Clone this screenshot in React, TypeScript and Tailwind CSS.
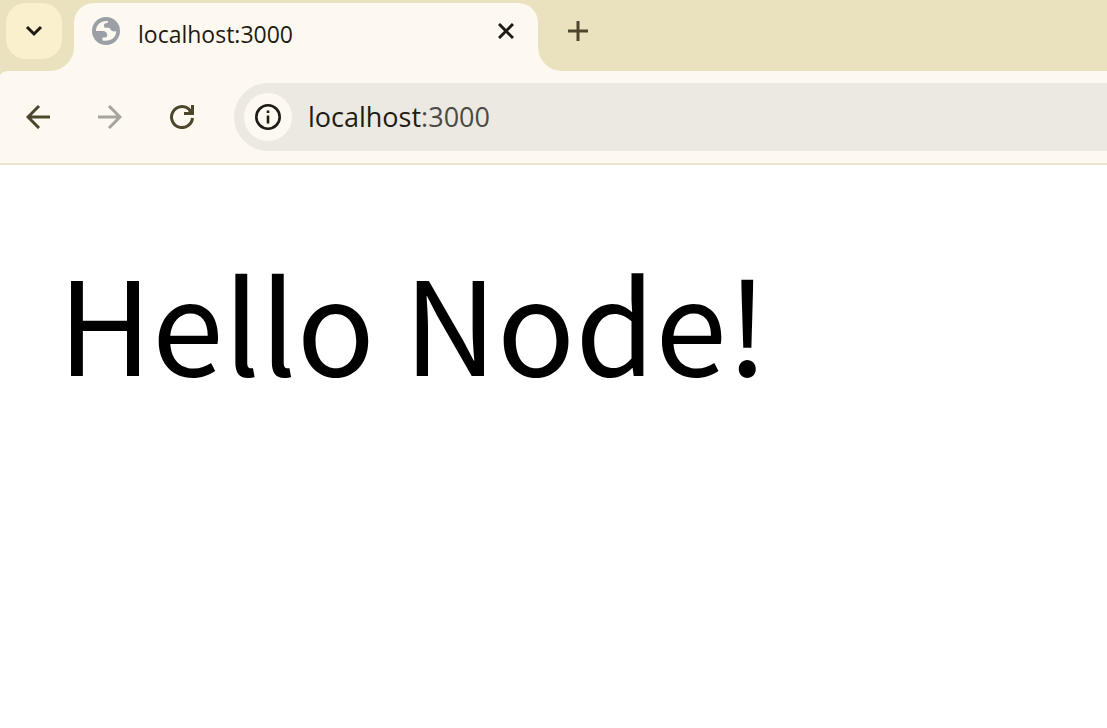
import React, { useState } from "react";

const GlobeIcon = () => (
  <svg viewBox="0 0 28 28" className="size-7 shrink-0" aria-hidden="true">
    <circle cx="14" cy="14" r="14" fill="#9AA0A6" />
    <path
      fill="#FEF9F0"
      d="M4 14C3.7 8.500 8.500 3.500 16 4c.2 1.600-.4 2.200-1.800 2.300C12.600 6.400 12 7 12 8.400c0 1.600.4 2.300 2 2.300h2.200c1.200 0 1.800.5 2.300 1.600.7 1.700 2 2.400 5.700 2C24 20.500 19 25 10.500 23.600v-3c1.700 0 3.500.2 4.300-.9.8-1.200.6-3-.5-4.200C13 14.200 12 14 10 14z"
    />
  </svg>
);

const ReloadIcon = () => (
  <svg viewBox="0 0 24 24" className="size-6" fill="none" stroke="currentColor" strokeWidth="3" aria-hidden="true">
    <path d="M22.500 13A10.500 10.500 0 1 1 19 4.200L22 8" />
    <path d="M22.500 0v8.500H14" />
    <path d="M22 3v6h-6z" fill="currentColor" stroke="none" />
  </svg>
);

const TabStrip = () => (
  <div className="flex h-[71px] items-start bg-[#EAE2BE] pl-1.5 pt-[3px]">
    <button
      aria-label="Search tabs"
      className="flex size-14 shrink-0 items-center justify-center rounded-[20px] bg-[#FBF0CD] text-[#1E1B13]"
    >
      <svg viewBox="0 0 18 12" className="h-3 w-[18px]" fill="none" stroke="currentColor" strokeWidth="3" aria-hidden="true">
        <path d="M2 2l7 7 7-7" />
      </svg>
    </button>

    {/* Active tab, flared into the toolbar at both feet */}
    <div className="relative ml-3 flex h-[68px] w-[464px] items-start rounded-t-[20px] bg-[#FEF9F0] pl-[18px] pr-5 pt-3.5">
      <svg viewBox="0 0 24 24" className="absolute -left-6 bottom-0 size-6" fill="#FEF9F0" aria-hidden="true">
        <path d="M24 0v24H0A24 24 0 0 0 24 0z" />
      </svg>
      <svg viewBox="0 0 24 24" className="absolute -right-6 bottom-0 size-6" fill="#FEF9F0" aria-hidden="true">
        <path d="M0 0v24h24A24 24 0 0 1 0 0z" />
      </svg>
      <GlobeIcon />
      <span className="ml-[18px] flex-1 text-[23px] leading-[34px] text-[#1E1B13]">localhost:3000</span>
      <button aria-label="Close tab" className="flex h-7 w-6 items-center justify-center text-[#1E1B13]">
        <svg viewBox="0 0 16 16" className="size-4" fill="none" stroke="currentColor" strokeWidth="3" aria-hidden="true">
          <path d="M1 1l14 14M15 1L1 15" />
        </svg>
      </button>
    </div>

    <button aria-label="New tab" className="ml-3 flex size-14 items-center justify-center text-[#4C462C]">
      <svg viewBox="0 0 20 20" className="size-5" fill="none" stroke="currentColor" strokeWidth="3" aria-hidden="true">
        <path d="M10 0v20M0 10h20" />
      </svg>
    </button>
  </div>
);

const AddressBar = () => {
  const [focused, setFocused] = useState(false);
  const [url, setUrl] = useState("localhost:3000");
  const [host, port] = url.split(":");

  return (
    <div className="flex h-[68px] min-w-0 flex-1 items-center rounded-l-full bg-[#ECE9E2] pl-2.5">
      <button
        aria-label="View site information"
        className="flex size-12 shrink-0 items-center justify-center rounded-full bg-[#FEF9F0] text-[#1E1B13]"
      >
        <svg viewBox="0 0 26 26" className="size-[26px]" fill="none" stroke="currentColor" aria-hidden="true">
          <circle cx="13" cy="13" r="11.700" strokeWidth="2.600" />
          <path d="M13 11.500v8M13 6.500v2.500" strokeWidth="2.600" />
        </svg>
      </button>
      {focused ? (
        <input
          autoFocus
          aria-label="Address"
          value={url}
          onChange={(e) => setUrl(e.target.value)}
          onBlur={() => setFocused(false)}
          className="ml-4 min-w-0 flex-1 bg-transparent text-[27px] leading-10 text-[#1E1B13] outline-none"
        />
      ) : (
        <button
          aria-label="Edit address"
          onClick={() => setFocused(true)}
          className="ml-4 min-w-0 flex-1 cursor-text text-left text-[27px] leading-10 text-[#1E1B13]"
        >
          {host}
          {port && <span className="text-[#4C4A45]">:{port}</span>}
        </button>
      )}
    </div>
  );
};

const Toolbar = () => (
  <div className="relative flex items-center border-b-2 border-[#EAE3D0] bg-[#FEF9F0] py-3">
    <svg viewBox="0 0 10 6" className="absolute left-0 top-0 h-1.5 w-2.5" fill="#EAE2BE" aria-hidden="true">
      <path d="M0 0h10C5 0 2 1 0 4z" />
    </svg>
    <nav className="flex shrink-0 items-center gap-4 pl-2.5 pr-6 text-[#4C462C]">
      <button aria-label="Back" className="flex size-14 items-center justify-center">
        <svg viewBox="0 0 24 24" className="size-6" fill="none" stroke="currentColor" strokeWidth="3" aria-hidden="true">
          <path d="M24 12H2M13 1L2 12l11 11" />
        </svg>
      </button>
      <button aria-label="Forward" disabled className="flex size-14 items-center justify-center text-[#A7A49C]">
        <svg viewBox="0 0 24 24" className="size-6" fill="none" stroke="currentColor" strokeWidth="3" aria-hidden="true">
          <path d="M0 12h22M11 1l11 11-11 11" />
        </svg>
      </button>
      <button aria-label="Reload" className="flex size-14 items-center justify-center">
        <ReloadIcon />
      </button>
    </nav>
    <AddressBar />
  </div>
);

const App = () => (
  <div className="min-h-screen bg-white font-['Open_Sans','Noto_Sans',sans-serif]">
    <header>
      <TabStrip />
      <Toolbar />
    </header>
    <main className="px-[58px] py-[90px]">
      <h1 className="font-['Noto_Sans_CJK_KR',sans-serif] text-[129px] font-normal leading-none text-black">Hello Node!</h1>
    </main>
  </div>
);

export default App;
